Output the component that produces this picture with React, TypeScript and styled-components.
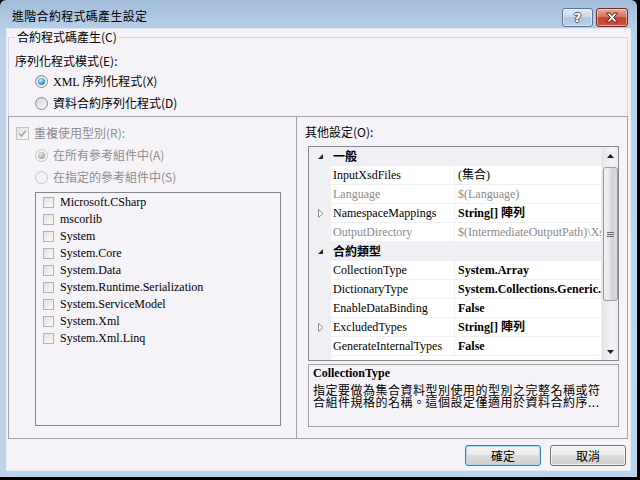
import React from "react";
import styled, { createGlobalStyle } from "styled-components";

const SANS = `"Noto Sans CJK TC", "Liberation Sans", sans-serif`;
const SERIF = `"Liberation Serif", "Noto Sans CJK TC", serif`;

const GlobalStyle = createGlobalStyle`
  html, body { margin: 0; padding: 0; background: #000; }
  body { width: 640px; height: 480px; overflow: hidden; font-family: ${SANS}; }
  * { box-sizing: border-box; }
`;

const Window = styled.div`
  width: 637px;
  height: 477px;
  display: flex;
  flex-direction: column;
  padding: 0 7px 7px 7px;
  border-top-left-radius: 6px;
  border-top-right-radius: 6px;
  background: linear-gradient(180deg, #a1bcd9 0px, #b6cde7 26px, #bcd3eb 40px, #bdd4ec 100%);
`;

const TitleBar = styled.div`
  height: 29px;
  display: flex;
  align-items: flex-start;
  flex: none;
`;

const Title = styled.div`
  margin-left: 5px;
  padding-top: 8px;
  font: 12px/16px ${SANS};
  letter-spacing: 0.3px;
  color: #000;
  flex: 1;
`;

const CaptionButton = styled.div<{ $close?: boolean }>`
  margin-top: 8px;
  width: ${(p) => (p.$close ? 32 : 31)}px;
  height: 19px;
  border-radius: 3px;
  border: 1px solid ${(p) => (p.$close ? "#6b2b28" : "#5d7592")};
  background: ${(p) =>
    p.$close
      ? "linear-gradient(180deg, #e8a999 0%, #d4725f 45%, #c2412c 52%, #c9553f 100%)"
      : "linear-gradient(180deg, #dfe9f5 0%, #c9d9eb 45%, #aec5df 52%, #bcd2ea 100%)"};
  box-shadow: inset 0 0 0 1px rgba(255, 255, 255, 0.45);
  display: flex;
  align-items: center;
  justify-content: center;
  margin-right: ${(p) => (p.$close ? 2 : 3)}px;
`;

const HelpGlyph = styled.span`
  font: bold 13px/13px "DejaVu Sans", sans-serif;
  color: #ffffff;
  text-shadow: 1px 0 0 #47586e, -1px 0 0 #47586e, 0 1px 0 #47586e, 0 -1px 0 #47586e;
`;

const Client = styled.div`
  flex: 1;
  background: #f5f3f7;
  display: flex;
  flex-direction: column;
  box-shadow: 0 0 0 1px rgba(255, 255, 255, 0.55);
`;

const Group = styled.fieldset`
  margin: 1px 2px 0 1px;
  padding: 0;
  min-width: 0;
  border: 1px solid #d7d6dc;
  display: flex;
  flex-direction: column;
`;

const Legend = styled.legend`
  margin-left: 6px;
  padding: 0 2px;
  font: 12px/14px ${SANS};
  color: #000;
`;

const Label = styled.div<{ $dim?: boolean }>`
  font: 12px/18px ${SANS};
  color: ${(p) => (p.$dim ? "#8d8d8d" : "#000")};
  white-space: nowrap;
`;

const TopLabel = styled(Label)`
  margin: 8px 0 0 6px;
  height: 18px;
`;

const OptionRow = styled.div<{ $indent: number }>`
  height: 22px;
  margin-left: ${(p) => p.$indent}px;
  display: flex;
  align-items: center;
  gap: 5px;
`;

const Serif = styled.span`
  font-family: ${SERIF};
`;

const Radio = styled.span<{ $checked?: boolean; $disabled?: boolean }>`
  width: 13px;
  height: 13px;
  border-radius: 50%;
  flex: none;
  border: 1px solid ${(p) => (p.$disabled ? "#c6c6c6" : "#8a8b8d")};
  background: ${(p) =>
    p.$disabled ? "#f3f3f3" : "linear-gradient(135deg, #d5d5d5, #fbfbfb)"};
  display: flex;
  align-items: center;
  justify-content: center;
  &::after {
    content: "";
    width: 7px;
    height: 7px;
    border-radius: 50%;
    display: ${(p) => (p.$checked ? "block" : "none")};
    background: ${(p) =>
      p.$disabled
        ? "radial-gradient(circle at 40% 35%, #f0f0f0, #b0b0b0 55%, #8c8c8c)"
        : "radial-gradient(circle at 40% 35%, #d4f0ff, #3e9be0 55%, #19559a)"};
  }
`;

const CheckBox = styled.span<{ $size: number; $disabled?: boolean }>`
  width: ${(p) => p.$size}px;
  height: ${(p) => p.$size}px;
  flex: none;
  border: 1px solid ${(p) => (p.$disabled ? "#c2c2c2" : "#b3b3b3")};
  background: linear-gradient(135deg, #e2e2e2, #fafafa);
  display: flex;
  align-items: center;
  justify-content: center;
`;

const Split = styled.div`
  margin: 2px -1px -1px -1px;
  height: 323px;
  border: 1px solid #a3a3a8;
  display: grid;
  grid-template-columns: 288px 1fr;
`;

const LeftPane = styled.div`
  border-right: 1px solid #a3a3a8;
  padding-top: 5px;
  display: flex;
  flex-direction: column;
`;

const RightPane = styled.div`
  padding-top: 6px;
  display: flex;
  flex-direction: column;
`;

const ListBox = styled.div`
  margin: 4px 0 0 26px;
  width: 246px;
  height: 234px;
  border: 1px solid #86878c;
  padding-top: 1px;
  display: flex;
  flex-direction: column;
`;

const ListItem = styled.div`
  height: 17px;
  display: flex;
  align-items: center;
  padding-left: 7px;
  gap: 6px;
  font: 12px/17px ${SERIF};
  color: #000;
  white-space: nowrap;
`;

const PaneLabel = styled(Label)`
  margin-left: 8px;
  height: 18px;
`;

const Grid = styled.div`
  margin: 5px 0 0 11px;
  width: 311px;
  height: 215px;
  border: 1px solid #86878c;
  display: flex;
  overflow: hidden;
`;

const Rows = styled.div`
  flex: 1;
  min-width: 0;
  display: flex;
  flex-direction: column;
  overflow: hidden;
  background: #f0eff4;
`;

const Row = styled.div`
  height: 19px;
  flex: none;
  display: grid;
  grid-template-columns: 22px 124px 1fr;
  border-bottom: 1px solid #f0eff4;
  background: #f0eff4;
`;

const Gutter = styled.div`
  display: flex;
  align-items: center;
  justify-content: center;
  padding-left: 1px;
`;

const NameCell = styled.div<{ $dim?: boolean; $cat?: boolean }>`
  padding-left: 2px;
  background: ${(p) => (p.$cat ? "transparent" : "#ffffff")};
  border-right: 1px solid ${(p) => (p.$cat ? "transparent" : "#f0eff4")};
  font: ${(p) => (p.$cat ? `bold 12px/18px ${SANS}` : `12px/18px ${SERIF}`)};
  color: ${(p) => (p.$dim ? "#8b8b8b" : "#000")};
  white-space: nowrap;
  overflow: hidden;
`;

const ValueCell = styled.div<{ $dim?: boolean; $bold?: boolean; $cat?: boolean }>`
  padding-left: 3px;
  background: ${(p) => (p.$cat ? "transparent" : "#ffffff")};
  font: ${(p) => (p.$bold ? "bold " : "")}12px/18px ${SERIF};
  color: ${(p) => (p.$dim ? "#8b8b8b" : "#000")};
  white-space: nowrap;
  overflow: hidden;
`;

const EmptyRow = styled.div`
  flex: 1;
  background: #ffffff;
  margin-left: 22px;
`;

const ScrollBar = styled.div`
  width: 17px;
  flex: none;
  display: flex;
  flex-direction: column;
  background: linear-gradient(90deg, #e4e4e6, #f3f3f5 60%, #ececee);
  border-left: 1px solid #ecebef;
`;

const ScrollArrow = styled.div`
  height: 17px;
  flex: none;
  display: flex;
  align-items: center;
  justify-content: center;
`;

const Track = styled.div`
  flex: 1;
  display: flex;
  flex-direction: column;
  align-items: center;
`;

const Thumb = styled.div`
  margin-top: 3px;
  width: 15px;
  height: 134px;
  border: 1px solid #9a9a9c;
  border-radius: 3px;
  background: linear-gradient(90deg, #f3f3f3 0%, #e6e6e8 45%, #d4d4d6 55%, #dcdcde 100%);
  display: flex;
  align-items: center;
  justify-content: center;
`;

const Desc = styled.div`
  margin: 3px 0 0 11px;
  width: 311px;
  height: 63px;
  border: 1px solid #a3a3a8;
  padding: 1px 0 0 4px;
`;

const DescTitle = styled.div`
  font: bold 12px/14px ${SERIF};
  color: #000;
`;

const DescText = styled.div`
  margin-top: 4px;
  font: 12px/12px ${SANS};
  letter-spacing: 0.5px;
  color: #000;
  white-space: nowrap;
`;

const ButtonBar = styled.div`
  display: flex;
  justify-content: flex-end;
  gap: 9px;
  padding: 6px 4px 0 0;
`;

const Button = styled.button<{ $default?: boolean }>`
  width: 76px;
  height: 21px;
  padding: 0;
  border-radius: 3px;
  border: 1px solid ${(p) => (p.$default ? "#3c7fb1" : "#707070")};
  background: linear-gradient(180deg, #f2f2f2 0%, #ebebeb 49%, #dddddd 50%, #cfcfcf 100%);
  box-shadow: inset 0 0 0 1px ${(p) => (p.$default ? "#a9dcf6" : "rgba(255,255,255,0.7)")};
  font: 12px/18px ${SANS};
  color: #000;
`;

const Triangle = ({ open }: { open: boolean }) =>
  open ? (
    <svg width="7" height="7" viewBox="0 0 7 7">
      <path d="M6 1 L6 6 L1 6 Z" fill="#262626" />
    </svg>
  ) : (
    <svg width="6" height="9" viewBox="0 0 6 9">
      <path d="M0.5 0.5 L5 4.5 L0.5 8.5 Z" fill="#fff" stroke="#8c8c8c" strokeWidth="1" />
    </svg>
  );

const CheckMark = ({ color }: { color: string }) => (
  <svg width="9" height="9" viewBox="0 0 9 9">
    <path d="M1 4.5 L3.5 7 L8 1.5" fill="none" stroke={color} strokeWidth="1.6" />
  </svg>
);

const CloseGlyph = () => (
  <svg width="14" height="11" viewBox="0 0 14 11">
    <path
      d="M1.5 1 L4.8 1 L7 3.6 L9.2 1 L12.5 1 L8.7 5.5 L12.5 10 L9.2 10 L7 7.4 L4.8 10 L1.5 10 L5.3 5.5 Z"
      fill="#ffffff"
      stroke="#5a1d1a"
      strokeWidth="1"
      strokeLinejoin="round"
    />
  </svg>
);

type GridRow = {
  cat?: boolean;
  name: string;
  value?: string;
  dim?: boolean;
  bold?: boolean;
  collapsed?: boolean;
};

const gridRows: GridRow[] = [
  { cat: true, name: "一般" },
  { name: "InputXsdFiles", value: "(集合)" },
  { name: "Language", value: "$(Language)", dim: true },
  { name: "NamespaceMappings", value: "String[] 陣列", bold: true, collapsed: true },
  { name: "OutputDirectory", value: "$(IntermediateOutputPath)\\XsdGeneratedCode", dim: true },
  { cat: true, name: "合約類型" },
  { name: "CollectionType", value: "System.Array", bold: true },
  { name: "DictionaryType", value: "System.Collections.Generic.Dictionary`2", bold: true },
  { name: "EnableDataBinding", value: "False", bold: true },
  { name: "ExcludedTypes", value: "String[] 陣列", bold: true, collapsed: true },
  { name: "GenerateInternalTypes", value: "False", bold: true },
];

const assemblies = [
  "Microsoft.CSharp",
  "mscorlib",
  "System",
  "System.Core",
  "System.Data",
  "System.Runtime.Serialization",
  "System.ServiceModel",
  "System.Xml",
  "System.Xml.Linq",
];

export default function App() {
  return (
    <>
      <GlobalStyle />
      <Window>
        <TitleBar>
          <Title>進階合約程式碼產生設定</Title>
          <CaptionButton>
            <HelpGlyph>?</HelpGlyph>
          </CaptionButton>
          <CaptionButton $close>
            <CloseGlyph />
          </CaptionButton>
        </TitleBar>
        <Client>
          <Group>
            <Legend>合約程式碼產生(C)</Legend>
            <TopLabel>序列化程式模式(E):</TopLabel>
            <OptionRow $indent={26}>
              <Radio $checked />
              <Label>
                <Serif>XML</Serif> 序列化程式(X)
              </Label>
            </OptionRow>
            <OptionRow $indent={26}>
              <Radio />
              <Label>資料合約序列化程式(D)</Label>
            </OptionRow>
            <Split>
              <LeftPane>
                <OptionRow $indent={7}>
                  <CheckBox $size={13} $disabled>
                    <CheckMark color="#a8a8a8" />
                  </CheckBox>
                  <Label $dim>重複使用型別(R):</Label>
                </OptionRow>
                <OptionRow $indent={26}>
                  <Radio $checked $disabled />
                  <Label $dim>在所有參考組件中(A)</Label>
                </OptionRow>
                <OptionRow $indent={26}>
                  <Radio $disabled />
                  <Label $dim>在指定的參考組件中(S)</Label>
                </OptionRow>
                <ListBox>
                  {assemblies.map((a) => (
                    <ListItem key={a}>
                      <CheckBox $size={11} />
                      {a}
                    </ListItem>
                  ))}
                </ListBox>
              </LeftPane>
              <RightPane>
                <PaneLabel>其他設定(O):</PaneLabel>
                <Grid>
                  <Rows>
                    {gridRows.map((r) => (
                      <Row key={r.name}>
                        <Gutter>
                          {r.cat ? <Triangle open /> : r.collapsed ? <Triangle open={false} /> : null}
                        </Gutter>
                        <NameCell $cat={r.cat} $dim={r.dim}>
                          {r.name}
                        </NameCell>
                        <ValueCell $cat={r.cat} $dim={r.dim} $bold={r.bold}>
                          {r.value ?? ""}
                        </ValueCell>
                      </Row>
                    ))}
                    <EmptyRow />
                  </Rows>
                  <ScrollBar>
                    <ScrollArrow>
                      <svg width="7" height="4" viewBox="0 0 7 4">
                        <path d="M0 4 L3.5 0 L7 4 Z" fill="#1e1e1e" />
                      </svg>
                    </ScrollArrow>
                    <Track>
                      <Thumb>
                        <svg width="7" height="7" viewBox="0 0 7 7">
                          <path d="M0 1.5 H7 M0 3.5 H7 M0 5.5 H7" stroke="#6b6b6b" strokeWidth="1" />
                        </svg>
                      </Thumb>
                    </Track>
                    <ScrollArrow>
                      <svg width="7" height="4" viewBox="0 0 7 4">
                        <path d="M0 0 L3.5 4 L7 0 Z" fill="#1e1e1e" />
                      </svg>
                    </ScrollArrow>
                  </ScrollBar>
                </Grid>
                <Desc>
                  <DescTitle>CollectionType</DescTitle>
                  <DescText>
                    指定要做為集合資料型別使用的型別之完整名稱或符
                    <br />
                    合組件規格的名稱。這個設定僅適用於資料合約序...
                  </DescText>
                </Desc>
              </RightPane>
            </Split>
          </Group>
          <ButtonBar>
            <Button $default>確定</Button>
            <Button>取消</Button>
          </ButtonBar>
        </Client>
      </Window>
    </>
  );
}
